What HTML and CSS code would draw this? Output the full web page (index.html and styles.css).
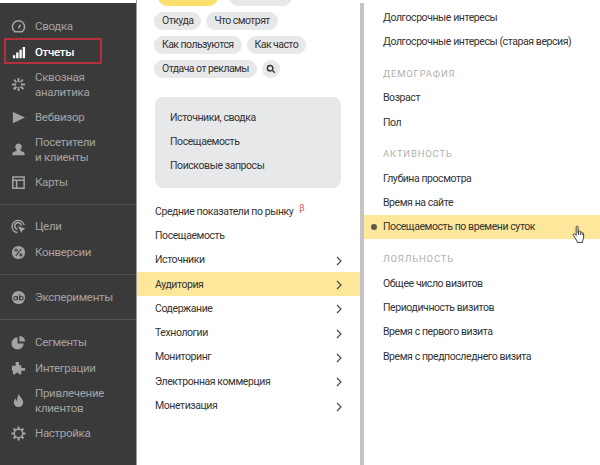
FILE: index.html
```html
<!DOCTYPE html>
<html lang="ru">
<head>
<meta charset="utf-8">
<title>Отчеты</title>
<link rel="stylesheet" href="styles.css">
</head>
<body>
<div class="app">
  <nav class="sidebar">
    <div class="group">
      <a class="item"><svg class="icon" viewBox="0 0 16 16"><path class="line" d="M4 13.500A6.500 6.500 0 1 1 12 13.500Z"/><path class="line" d="M8 10l2-4"/></svg><span>Сводка</span></a>
      <a class="item active"><svg class="icon" viewBox="0 0 16 16"><path class="fill-w" d="M2 11h2.500v3H2zM5.500 8H8v6H5.500zM9 5h2.500v9H9zM12.500 2H15v12h-2.500z"/></svg><span>Отчеты</span><i class="mark"></i></a>
      <a class="item double"><svg class="icon" viewBox="0 0 16 16"><path class="fill" d="M7 1h2v4.500H7zM7 10.500h2V15H7zM1 7h4.500v2H1zM10.500 7H15v2h-4.500zM2.500 3.500 4 2l2.500 3L5 6.500zM9.500 11 11 9.500 14 12l-1.500 1.500zM2 12l3-2.500L6.500 11 4 14zM9.500 5 12 2l1.500 1.500-3 2.500z"/></svg><span>Сквозная<br>аналитика</span></a>
      <a class="item"><svg class="icon" viewBox="0 0 16 16"><path class="fill" d="M2 2l13 6-13 6z"/></svg><span>Вебвизор</span></a>
      <a class="item double"><svg class="icon" viewBox="0 0 16 16"><path class="fill" d="M8 1.500a3.500 3.500 0 0 1 3.200 5c-.6 1.200-1.200 1.700-1.200 2.500 0 1 4 1 4.500 3v2h-13v-2c.5-2 4.500-2 4.500-3 0-.8-.6-1.300-1.200-2.500A3.500 3.500 0 0 1 8 1.500z"/></svg><span>Посетители<br>и клиенты</span></a>
      <a class="item"><svg class="icon" viewBox="0 0 16 16"><path class="line" d="M2 2h12v12H2zM2 5.500h12M6 5.500V14"/></svg><span>Карты</span></a>
    </div>
    <div class="group">
      <a class="item"><svg class="icon" viewBox="0 0 16 16"><path class="line" d="M14 6.500A6.500 6.500 0 1 0 7 14.500M11 7a3.500 3.500 0 1 0-4 4"/><path class="fill" d="M7.500 7.500l8 3-3 1.500-1.500 3z"/></svg><span>Цели</span></a>
      <a class="item"><svg class="icon" viewBox="0 0 16 16"><circle class="fill" cx="8" cy="8" r="7"/><path class="cut" d="M5 11.500l6-7"/><circle class="cut" cx="5.500" cy="5.500" r="1.200"/><circle class="cut" cx="10.500" cy="10.500" r="1.200"/></svg><span>Конверсии</span></a>
    </div>
    <div class="group">
      <a class="item"><svg class="icon" viewBox="0 0 16 16"><circle class="fill" cx="8" cy="8" r="7"/><circle class="cut" cx="4.900" cy="8.800" r="1.900"/><circle class="cut" cx="11.100" cy="8.800" r="1.900"/><path class="cut" d="M6.800 6.500v4.200M9.200 4.800v6"/></svg><span>Эксперименты</span></a>
    </div>
    <div class="group">
      <a class="item"><svg class="icon" viewBox="0 0 16 16"><path class="fill" d="M7 2.500v6.500h6.500A6.500 6.500 0 1 1 7 2.500zM9 1a6 6 0 0 1 6 6H9z"/></svg><span>Сегменты</span></a>
      <a class="item"><svg class="icon" viewBox="0 0 16 16"><path class="fill" d="M5 1h3.500v3.500H11V7.500h4v3h-4V14H8v-1.500H5V14H2v-3.500H1V5h4z"/></svg><span>Интеграции</span></a>
      <a class="item double"><svg class="icon" viewBox="0 0 16 16"><path class="fill" d="M8.500 1c.5 3 4.500 5 4.500 9a5 5 0 0 1-10 0c0-2 1-3.500 2-4.500 0 1.500.5 2.500 1.500 3C6.500 6 7 3 8.500 1z"/></svg><span>Привлечение<br>клиентов</span></a>
      <a class="item"><svg class="icon" viewBox="0 0 16 16"><circle class="line" cx="8" cy="8" r="4.500"/><path class="line wide" d="M8 .5v3M8 12.500v3M.5 8h3M12.500 8h3M2.700 2.700l2.100 2.100M11.200 11.200l2.100 2.100M2.700 13.300l2.100-2.100M11.200 4.800l2.100-2.100"/></svg><span>Настройка</span></a>
    </div>
  </nav>

  <section class="panel middle">
    <div class="pills">
      <span class="pill pill-current"></span>
      <span class="pill pill-clipped"></span>
      <span class="pill">Откуда</span>
      <span class="pill">Что смотрят</span>
      <span class="pill">Как пользуются</span>
      <span class="pill">Как часто</span>
      <span class="pill">Отдача от рекламы</span>
      <span class="pill pill-round"><svg class="search" viewBox="0 0 12 12"><circle cx="5" cy="5" r="3.300"/><path d="M7.500 7.500l3 3"/></svg></span>
    </div>
    <div class="recent">
      <div>Источники, сводка</div>
      <div>Посещаемость</div>
      <div>Поисковые запросы</div>
    </div>
    <ul class="menu">
      <li class="row">Средние показатели по рынку<sup class="beta">β</sup></li>
      <li class="row">Посещаемость</li>
      <li class="row more">Источники<svg class="chev" viewBox="0 0 6 10"><path d="M1 1l4 4-4 4"/></svg></li>
      <li class="row more selected">Аудитория<svg class="chev" viewBox="0 0 6 10"><path d="M1 1l4 4-4 4"/></svg></li>
      <li class="row more">Содержание<svg class="chev" viewBox="0 0 6 10"><path d="M1 1l4 4-4 4"/></svg></li>
      <li class="row more">Технологии<svg class="chev" viewBox="0 0 6 10"><path d="M1 1l4 4-4 4"/></svg></li>
      <li class="row more">Мониторинг<svg class="chev" viewBox="0 0 6 10"><path d="M1 1l4 4-4 4"/></svg></li>
      <li class="row more">Электронная коммерция<svg class="chev" viewBox="0 0 6 10"><path d="M1 1l4 4-4 4"/></svg></li>
      <li class="row more">Монетизация<svg class="chev" viewBox="0 0 6 10"><path d="M1 1l4 4-4 4"/></svg></li>
    </ul>
  </section>

  <section class="panel right">
    <ul class="menu sub">
      <li class="row">Долгосрочные интересы</li>
      <li class="row">Долгосрочные интересы (старая версия)</li>
      <li class="heading">Демография</li>
      <li class="row">Возраст</li>
      <li class="row">Пол</li>
      <li class="heading">Активность</li>
      <li class="row">Глубина просмотра</li>
      <li class="row">Время на сайте</li>
      <li class="row selected dot">Посещаемость по времени суток
        <svg class="hand" viewBox="0 0 14 20"><path d="M4.500 2c0-1.300 2-1.300 2 0v6l.5-1.500c1-.4 1.800 0 2 .8 1-.4 1.700 0 1.900.8 1-.2 1.600.4 1.600 1.400v3.500c0 1.500-.5 2.500-1 3.500v2H5.500v-1.500L1.500 11c-.8-1.200.5-2.300 1.500-1.500l1.500 1.500z"/><path d="M7 7v3.500M9 7.500v3M11 8.500v2"/></svg>
      </li>
      <li class="heading">Лояльность</li>
      <li class="row">Общее число визитов</li>
      <li class="row">Периодичность визитов</li>
      <li class="row">Время с первого визита</li>
      <li class="row">Время с предпоследнего визита</li>
    </ul>
  </section>
</div>
</body>
</html>
```
FILE: styles.css
```css
* { box-sizing: border-box; }
html, body { margin: 0; height: 100%; background: #fff; overflow: hidden; }
body { font-family: Roboto, "Noto Sans", sans-serif; font-size: 10.5px; letter-spacing: -0.42px; color: #333; }
ul { list-style: none; margin: 0; padding: 0; }

.app { display: flex; height: 465px; overflow: hidden; }

/* Sidebar */
.sidebar {
  flex: 0 0 136px;
  margin-top: 3px;
  padding-top: 10px;
  background: #3a3a3a;
  color: #a3a3a3;
  font-size: 11.5px;
  letter-spacing: -0.3px;
}
.group { padding-bottom: 9px; margin-bottom: 9px; border-bottom: 1px solid #525252; }
.group:first-child { margin-bottom: 8px; }
.group:last-child { border-bottom: 0; }
.item {
  position: relative;
  display: flex;
  align-items: center;
  gap: 9px;
  height: 26px;
  padding-left: 11px;
  line-height: 15px;
}
.item.double { height: 39px; }
.item.active { color: #fff; font-weight: 500; }
.icon { flex: 0 0 15px; width: 15px; height: 15px; }
.line { fill: none; stroke: #a3a3a3; stroke-width: 1.6; }
.line.wide { stroke-width: 2.2; }
.fill { fill: #a3a3a3; }
.fill-w { fill: #fff; }
.cut { fill: none; stroke: #3a3a3a; stroke-width: 1.2; }
.mark {
  position: absolute;
  left: 4px;
  top: -1px;
  width: 98px;
  height: 26px;
  border: 2px solid #b5303a;
}

/* Panels */
.panel { overflow: hidden; }
.middle {
  flex: 0 0 224px;
  border-left: 1px solid #9a9a9a;
}
.right {
  flex: 1;
  border-left: 4px solid #c4c4c4;
  margin-top: 3px;
  padding-top: 2px;
}

/* Pills */
.pills {
  display: flex;
  flex-wrap: wrap;
  gap: 6px 5px;
  margin: -12px 0 19px 17px;
  width: 155px;
}
.pill {
  height: 18px;
  padding: 0 8px;
  border-radius: 9px;
  background: #e7e8ea;
  line-height: 18px;
  letter-spacing: -0.55px;
  white-space: nowrap;
}
.pill-current { width: 60px; margin-left: 4px; background: #fbdf6c; }
.pill-clipped { width: 63px; margin-left: 6px; }
.pill-round { display: flex; align-items: center; justify-content: center; width: 18px; padding: 0; }
.search { width: 10px; height: 10px; fill: none; stroke: #333; stroke-width: 1.7; }

/* Recent box */
.recent {
  margin: 0 18px 11px;
  padding: 9px 15px;
  border-radius: 8px;
  background: #e7e8ea;
  width: 186px;
  height: 91px;
}
.recent div { height: 24px; line-height: 24px; }

/* Menus */
.row {
  position: relative;
  display: flex;
  align-items: center;
  justify-content: space-between;
  height: 24.3px;
  padding: 0 18px 0 18px;
  white-space: nowrap;
}
.selected { background: #fce79b; }
.chev { width: 6px; height: 10px; margin-top: 2px; fill: none; stroke: #444; stroke-width: 1.1; }
.beta { color: #d0574f; font-size: 9px; margin: -6px auto 0 6px; }

.sub .row { padding-left: 19px; padding-right: 0; justify-content: flex-start; }
.heading {
  height: 32px;
  padding: 12px 0 0 19px;
  line-height: 16px;
  font-size: 9.5px;
  letter-spacing: 0.8px;
  text-transform: uppercase;
  color: #b0b0b0;
}
.dot::before {
  content: "";
  position: absolute;
  left: 6.5px;
  top: 9px;
  width: 6px;
  height: 6px;
  border-radius: 50%;
  background: #5c5a40;
}
.hand {
  position: absolute;
  left: 208px;
  top: 10px;
  width: 13px;
  height: 19px;
  fill: #fff;
  stroke: #333;
  stroke-width: 1;
}
```
